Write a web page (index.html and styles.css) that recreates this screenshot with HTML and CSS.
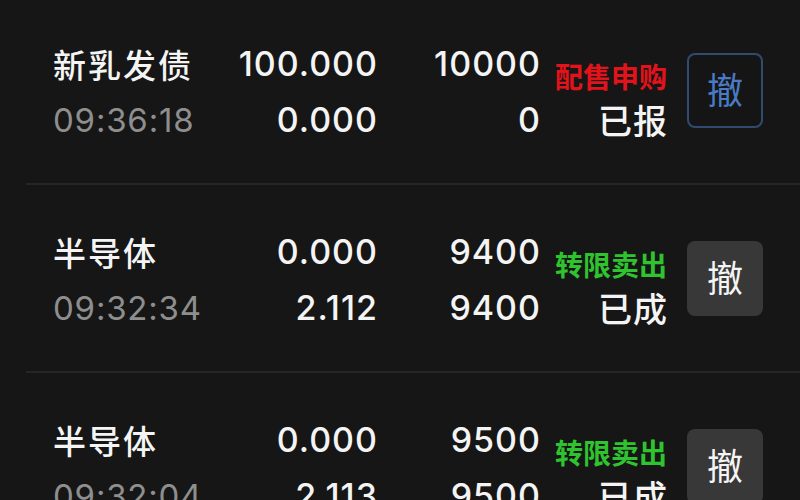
FILE: index.html
```html
<!DOCTYPE html>
<html lang="zh-CN">
<head>
<meta charset="utf-8">
<title>委托列表</title>
<link rel="stylesheet" href="styles.css">
</head>
<body>
<div class="list">
  <div class="row">
    <div class="name">新乳发债</div>
    <div class="num p1">100.000</div>
    <div class="num q1">10000</div>
    <div class="tag red">配售申购</div>
    <div class="btn-cell"><button class="btn btn-blue">撤</button></div>
    <div class="time">09:36:18</div>
    <div class="num p2">0.000</div>
    <div class="num q2">0</div>
    <div class="status">已报</div>
  </div>
  <div class="row">
    <div class="name">半导体</div>
    <div class="num p1">0.000</div>
    <div class="num q1">9400</div>
    <div class="tag green">转限卖出</div>
    <div class="btn-cell"><button class="btn btn-gray">撤</button></div>
    <div class="time">09:32:34</div>
    <div class="num p2">2.112</div>
    <div class="num q2">9400</div>
    <div class="status">已成</div>
  </div>
  <div class="row">
    <div class="name">半导体</div>
    <div class="num p1">0.000</div>
    <div class="num q1">9500</div>
    <div class="tag green">转限卖出</div>
    <div class="btn-cell"><button class="btn btn-gray">撤</button></div>
    <div class="time">09:32:04</div>
    <div class="num p2">2.113</div>
    <div class="num q2">9500</div>
    <div class="status">已成</div>
  </div>
</div>
</body>
</html>
```

FILE: styles.css
```css
html, body {
  margin: 0;
  padding: 0;
  background: #161616;
  height: 100%;
  overflow: hidden;
}
body {
  font-family: Inter, "Noto Sans CJK SC", sans-serif;
  color: #f2f2f2;
}
.list {
  margin-top: -3px;
  padding-left: 26px;
}
.row {
  display: grid;
  grid-template-columns: 177px 147px 163px 127px 97px;
  grid-template-rows: 56px 56px;
  padding: 39px 0 35px 27px;
  border-bottom: 2px solid #252525;
}
.name {
  grid-column: 1; grid-row: 1;
  font-family: "Noto Sans CJK SC", sans-serif;
  font-size: 33px;
  font-weight: 500;
  letter-spacing: 2px;
  line-height: 56px;
  color: #f4f4f4;
}
.time {
  grid-column: 1; grid-row: 2;
  font-size: 33px;
  line-height: 56px;
  color: #8e8e8e;
  letter-spacing: 0.8px;
}
.num {
  font-size: 34px;
  font-weight: 500;
  line-height: 56px;
  text-align: right;
  color: #f4f4f4;
  letter-spacing: 1px;
  margin-right: -1px;
}
.p1 { grid-column: 2; grid-row: 1; }
.q1 { grid-column: 3; grid-row: 1; }
.p2 { grid-column: 2; grid-row: 2; }
.q2 { grid-column: 3; grid-row: 2; }
.tag {
  grid-column: 4; grid-row: 1;
  align-self: end;
  font-family: "Noto Sans CJK SC", sans-serif;
  font-weight: 700;
  font-size: 28px;
  line-height: 30px;
  text-align: right;
  margin-bottom: 1px;
}
.red { color: #e3131b; }
.green { color: #2fc42f; }
.status {
  grid-column: 4; grid-row: 2;
  font-family: "Noto Sans CJK SC", sans-serif;
  font-size: 34px;
  font-weight: 500;
  line-height: 56px;
  text-align: right;
  letter-spacing: 1px;
  margin-right: -1px;
  color: #f4f4f4;
}
.btn-cell {
  grid-column: 5; grid-row: 1 / span 2;
  display: flex;
  align-items: center;
  padding-left: 20px;
}
.btn {
  width: 76px;
  height: 75px;
  margin-top: -4px;
  border-radius: 8px;
  font-family: "Noto Sans CJK SC", sans-serif;
  font-size: 36px;
  padding: 0 0 4px;
  display: flex;
  align-items: center;
  justify-content: center;
}
.btn-blue {
  background: #151515;
  border: 2px solid #304a70;
  color: #4a7ac4;
}
.btn-gray {
  background: #383838;
  border: none;
  color: #f4f4f4;
}
```
